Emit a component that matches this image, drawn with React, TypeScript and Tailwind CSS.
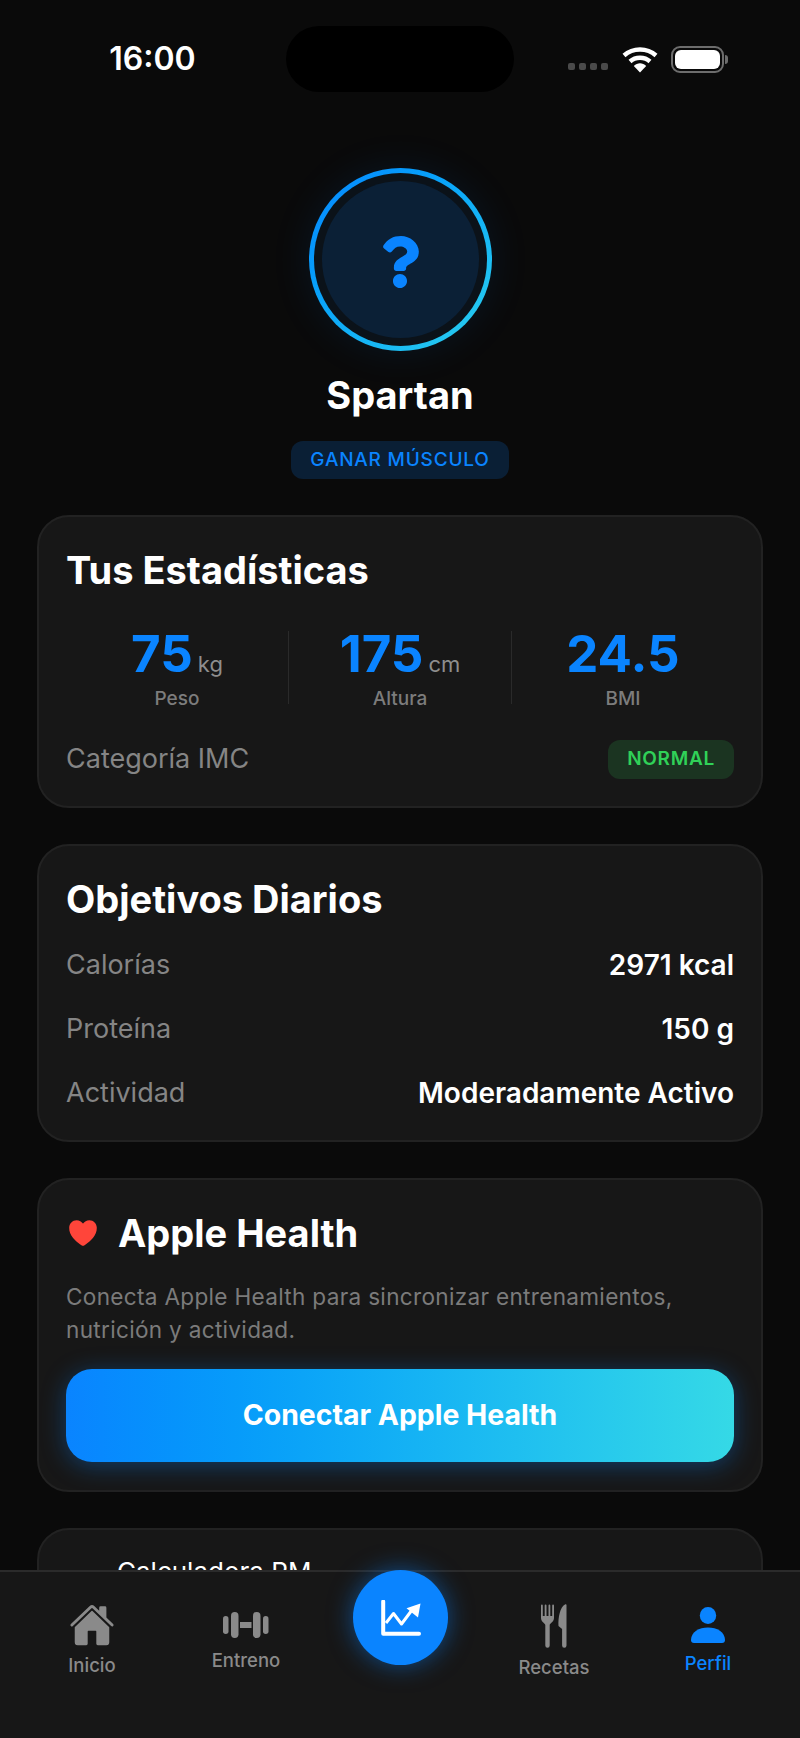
import React from "react";
import { IoHome, IoHeart } from "react-icons/io5";
import { FaQuestion } from "react-icons/fa";

function Wifi() {
  return (
    <svg width="36" height="27" viewBox="0 0 36 27" fill="none">
      <path d="M2 9.5C11 1.5 25 1.5 34 9.5" stroke="#fff" strokeWidth="4.4" />
      <path d="M8 15.5C13.5 10.5 22.5 10.5 28 15.5" stroke="#fff" strokeWidth="4.4" />
      <path d="M11.8 20C15.5 16.3 20.5 16.3 24.2 20L18 26.5Z" fill="#fff" />
    </svg>
  );
}

function Battery() {
  return (
    <div className="flex items-center">
      <div className="w-[53px] h-[27px] rounded-[9px] border-2 border-[#6d6d6d] p-[2px]">
        <div className="w-full h-full rounded-[6px] bg-white" />
      </div>
      <div className="w-[3px] h-[9px] rounded-r-full bg-[#6d6d6d] ml-[1px]" />
    </div>
  );
}

function Barbell() {
  return (
    <svg width="46" height="30" viewBox="0 0 46 30" fill="#8a8a8a">
      <rect x="0" y="6" width="5.5" height="18" rx="2.7" />
      <rect x="8" y="2" width="7.5" height="26" rx="3.7" />
      <rect x="17" y="12" width="11.5" height="6" />
      <rect x="30" y="2" width="7.5" height="26" rx="3.7" />
      <rect x="40" y="6" width="5.5" height="18" rx="2.7" />
    </svg>
  );
}

function ForkKnife() {
  return (
    <svg width="26" height="44" viewBox="0 0 26 44" fill="#8a8a8a">
      <path d="M0 1.5a.9.9 0 0 1 1.8 0V12H3.7V1.5a.9.9 0 0 1 1.8 0V12H7.5V1.5a.9.9 0 0 1 1.8 0V12H11.2V1.5a.9.9 0 0 1 1.8 0V14C13 18 9 19 8.7 21V41.5a2.2 2.2 0 0 1-4.4 0V21C4 19 0 18 0 14Z" />
      <path d="M25.5 1V41.5a2.2 2.2 0 0 1-4.4 0V25L17.5 22C17 14 19 3 24 .5C25 0 25.5 .3 25.5 1Z" />
    </svg>
  );
}

function PersonIcon() {
  return (
    <svg width="34" height="36" viewBox="0 0 34 36" fill="#0a84ff">
      <ellipse cx="17" cy="8.5" rx="8.2" ry="8.5" />
      <path d="M0 33C0 25 8 20.5 17 20.5S34 25 34 33C34 35 33 36 31 36H3C1 36 0 35 0 33Z" />
    </svg>
  );
}

function ChartIcon() {
  return (
    <svg width="40" height="36" viewBox="0 0 40 36" fill="none">
      <path d="M2.2 1.5V33.7H38" stroke="#fff" strokeWidth="4" strokeLinecap="round" strokeLinejoin="round" />
      <path d="M5 23L12.5 13.5L20.5 24L31 10" stroke="#fff" strokeWidth="3" strokeLinejoin="round" />
      <path d="M25.5 8.2L39.5 3.5L37 17.5Z" fill="#fff" />
    </svg>
  );
}

function Stat({ value, unit, label }: { value: string; unit?: string; label: string }) {
  return (
    <div className="flex-1 flex flex-col items-center">
      <div className="flex items-baseline h-[50px]">
        <span className="text-[51px] leading-[50px] font-bold text-[#0a84ff]">{value}</span>
        {unit && <span className="text-[22px] leading-[24px] text-[#8e8e8e] ml-[5px]">{unit}</span>}
      </div>
      <div className="mt-[9px] text-[19px] leading-[22px] font-medium text-[#7c7c7c]">{label}</div>
    </div>
  );
}

function Row({ label, value }: { label: string; value: string }) {
  return (
    <div className="flex items-center justify-between h-[64px]">
      <span className="text-[27px] text-[#858585]">{label}</span>
      <span className="text-[28px] font-semibold text-white">{value}</span>
    </div>
  );
}

function Tab({
  icon,
  label,
  active,
  pt,
  gap,
}: {
  icon: React.ReactNode;
  label: string;
  active?: boolean;
  pt: string;
  gap: string;
}) {
  return (
    <div className={`w-[154px] flex flex-col items-center ${pt}`}>
      <div className={`flex items-center justify-center ${gap}`}>{icon}</div>
      <span className={`text-[18.5px] leading-[22px] font-medium ${active ? "text-[#0a84ff]" : "text-[#8a8a8a]"}`}>
        {label}
      </span>
    </div>
  );
}

export default function App() {
  return (
    <div
      className="relative w-[800px] h-[1738px] overflow-hidden bg-[#0a0a0a] flex flex-col"
      style={{ fontFamily: "Inter, 'Noto Sans', sans-serif" }}
    >
      <div className="flex-1 min-h-0 overflow-hidden">
        {/* status bar */}
        <div className="flex items-center h-[66px] mt-[26px]">
          <div className="w-[286px] pl-[19px] text-center text-[32px] font-semibold text-white leading-none">
            16:00
          </div>
          <div className="w-[228px] h-[66px] rounded-[33px] bg-black" />
          <div className="flex items-center ml-[54px]">
            <div className="flex gap-[4px] mt-[14px] mr-[14px]">
              <div className="w-[7px] h-[7px] rounded-[2px] bg-[#4a4a4a]" />
              <div className="w-[7px] h-[7px] rounded-[2px] bg-[#4a4a4a]" />
              <div className="w-[7px] h-[7px] rounded-[2px] bg-[#4a4a4a]" />
              <div className="w-[7px] h-[7px] rounded-[2px] bg-[#4a4a4a]" />
            </div>
            <Wifi />
            <div className="ml-[13px]">
              <Battery />
            </div>
          </div>
        </div>

        {/* profile */}
        <div className="flex flex-col items-center mt-[76px]">
          <div className="w-[183px] h-[183px] rounded-full p-[5px] bg-gradient-to-br from-[#0a84ff] to-[#2bd0ee] shadow-[0_0_40px_rgba(10,132,255,0.1)]">
            <div className="w-full h-full rounded-full bg-[#0b1219] p-[8px]">
              <div className="w-full h-full rounded-full bg-[#0b2036] flex items-center justify-center pt-[5px]">
                <FaQuestion size={52} color="#0a84ff" />
              </div>
            </div>
          </div>
          <div className="mt-[22px] text-[38px] leading-[44px] font-bold text-white">Spartan</div>
          <div className="mt-[24px] h-[38px] w-[218px] rounded-[12px] bg-[#0a1f35] flex items-center justify-center text-[19px] font-medium tracking-[0.8px] text-[#0a84ff]">
            GANAR MÚSCULO
          </div>
        </div>

        <div className="mx-[37px] mt-[36px] flex flex-col gap-[36px]">
          {/* stats */}
          <div className="h-[293px] rounded-[32px] bg-[#171717] border-2 border-[#222222] px-[27px] pt-[31px]">
            <h2 className="text-[38px] leading-[44px] font-bold text-white">Tus Estadísticas</h2>
            <div className="flex items-stretch mt-[37px]">
              <Stat value="75" unit="kg" label="Peso" />
              <div className="w-px bg-[#2a2a2a] mt-[2px] mb-[6px]" />
              <Stat value="175" unit="cm" label="Altura" />
              <div className="w-px bg-[#2a2a2a] mt-[2px] mb-[6px]" />
              <Stat value="24.5" label="BMI" />
            </div>
            <div className="flex items-center justify-between mt-[29px]">
              <span className="text-[27px] text-[#858585]">Categoría IMC</span>
              <span className="w-[126px] h-[39px] rounded-[12px] bg-[#1b3421] flex items-center justify-center text-[19px] font-semibold tracking-[0.7px] text-[#30d158]">
                NORMAL
              </span>
            </div>
          </div>

          {/* goals */}
          <div className="h-[298px] rounded-[32px] bg-[#171717] border-2 border-[#222222] px-[27px] pt-[31px]">
            <h2 className="text-[38px] leading-[44px] font-bold text-white">Objetivos Diarios</h2>
            <div className="mt-[12px]">
              <Row label="Calorías" value="2971 kcal" />
              <Row label="Proteína" value="150 g" />
              <Row label="Actividad" value="Moderadamente Activo" />
            </div>
          </div>

          {/* health */}
          <div className="h-[314px] rounded-[32px] bg-[#171717] border-2 border-[#222222] px-[27px] pt-[31px]">
            <div className="flex items-center gap-[18px]">
              <IoHeart size={34} color="#ff453a" />
              <h2 className="text-[38px] leading-[44px] font-bold text-white">Apple Health</h2>
            </div>
            <p className="mt-[25px] text-[22.6px] leading-[33px] text-[#7b7b7b] tracking-[0.3px]">
              Conecta Apple Health para sincronizar entrenamientos,
              <br />
              nutrición y actividad.
            </p>
            <div className="mt-[23px] h-[93px] rounded-[26px] bg-gradient-to-r from-[#0a84ff] to-[#35d9e6] shadow-[0_4px_24px_rgba(10,132,255,0.35)] flex items-center justify-center text-[28.4px] font-bold text-white">
              Conectar Apple Health
            </div>
          </div>

          {/* calculators, cut by the tab bar */}
          <div className="h-[200px] rounded-[32px] bg-[#171717] border-2 border-[#222222] px-[27px] pt-[26px]">
            <div className="ml-[51px] text-[26px] leading-[32px] text-white">Calculadora RM</div>
          </div>
        </div>
      </div>

      {/* tab bar */}
      <div className="absolute left-0 right-0 bottom-0 h-[168px] bg-[#171717] border-t-2 border-[#2b2b2b] flex justify-center">
        <Tab icon={<IoHome size={46} color="#8a8a8a" />} label="Inicio" pt="pt-[30px]" gap="mb-[6px]" />
        <Tab icon={<Barbell />} label="Entreno" pt="pt-[38px]" gap="mb-[9px]" />
        <div className="w-[154px]" />
        <Tab icon={<ForkKnife />} label="Recetas" pt="pt-[32px]" gap="mb-[8px]" />
        <Tab icon={<PersonIcon />} label="Perfil" active pt="pt-[35px]" gap="mb-[9px]" />
      </div>

      {/* center action */}
      <div className="absolute left-[353px] top-[1570px] w-[95px] h-[95px] rounded-full bg-[#0a84ff] shadow-[0_0_24px_rgba(10,132,255,0.5)] flex items-center justify-center">
        <ChartIcon />
      </div>
    </div>
  );
}
